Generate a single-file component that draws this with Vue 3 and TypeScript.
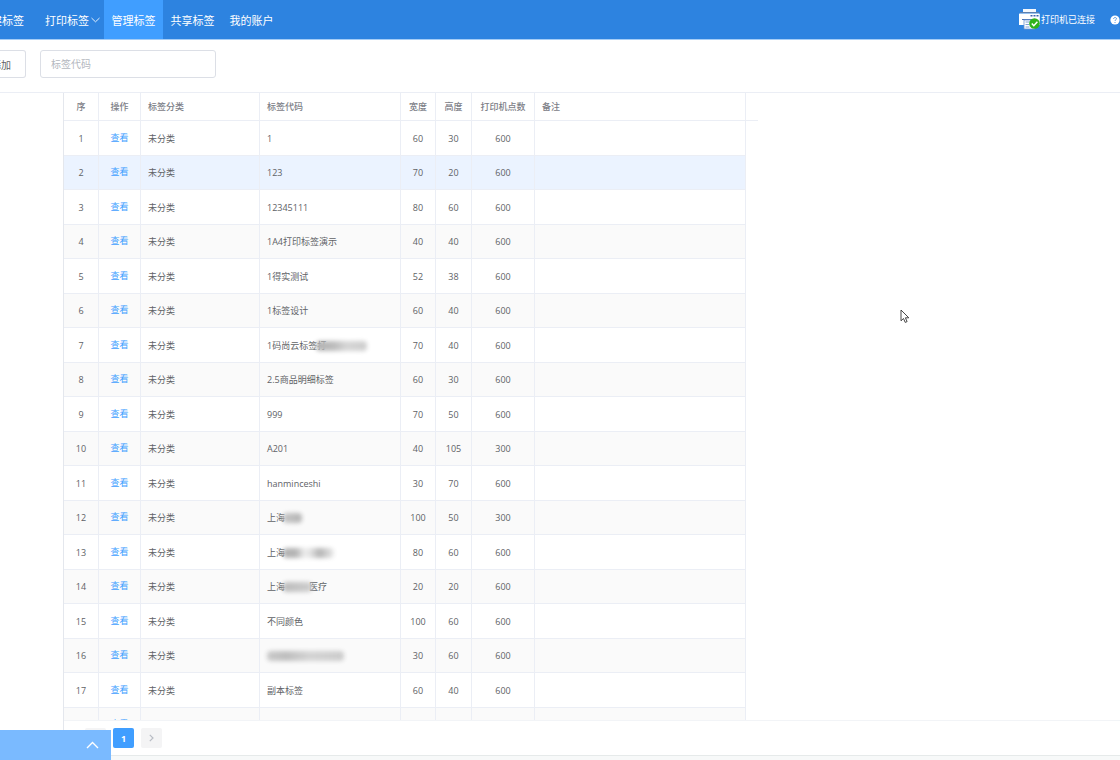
<script setup lang="ts">
import { ref } from 'vue'

interface Smudge {
  kind: string
  after?: string
}

interface LabelRow {
  id: string
  category: string
  code: string
  width: string
  height: string
  dpi: string
  smudge?: Smudge
}

const row = (id: string, code: string, width: string, height: string, dpi = '600', smudge?: Smudge): LabelRow => ({
  id,
  category: '未分类',
  code,
  width,
  height,
  dpi,
  smudge,
})

const navItems = ['打印标签', '管理标签', '共享标签', '我的账户']
const active = ref('管理标签')
const keyword = ref('')
const selected = ref('2')

const rows: LabelRow[] = [
  row('1', '1', '60', '30'),
  row('2', '123', '70', '20'),
  row('3', '12345111', '80', '60'),
  row('4', '1A4打印标签演示', '40', '40'),
  row('5', '1得实测试', '52', '38'),
  row('6', '1标签设计', '60', '40'),
  row('7', '1码尚云标签打', '70', '40', '600', { kind: 'wide' }),
  row('8', '2.5商品明细标签', '60', '30'),
  row('9', '999', '70', '50'),
  row('10', 'A201', '40', '105', '300'),
  row('11', 'hanminceshi', '30', '70'),
  row('12', '上海', '100', '50', '300', { kind: 'short' }),
  row('13', '上海', '80', '60', '600', { kind: 'split' }),
  row('14', '上海', '20', '20', '600', { kind: 'medium', after: '医疗' }),
  row('15', '不同颜色', '100', '60'),
  row('16', '', '30', '60', '600', { kind: 'full' }),
  row('17', '副本标签', '60', '40'),
  { id: '', category: '', code: '', width: '', height: '', dpi: '' },
]
</script>

<template>
  <div class="page">
    <header class="topbar">
      <nav class="nav">
        <a href="#" class="nav-item first">新建标签</a>
        <a
          v-for="item in navItems"
          :key="item"
          href="#"
          class="nav-item"
          :class="{ active: item === active, submenu: item === '打印标签' }"
          @click.prevent="active = item"
        >
          {{ item }}
          <svg v-if="item === '打印标签'" width="9" height="6" viewBox="0 0 9 6" aria-hidden="true">
            <path d="M.5 1l4 3.800L8.500 1" fill="none" stroke="#e3effc" stroke-width="1" />
          </svg>
        </a>
      </nav>
      <div class="printer">
        <svg width="21" height="21" viewBox="0 0 21 21" aria-hidden="true">
          <path d="M4 0h13v4H4z" fill="#f4f8fd" />
          <path d="M1 4.500h19a.8.8 0 0 1 .8.800V16H0V5.300a.8.800 0 0 1 1-.8z" fill="#fff" />
          <path d="M1 3.500h19" stroke="#5d7fae" stroke-width="1" />
          <path d="M11.500 6h2v1.500h-2zM14.500 6h2v1.500h-2zM17.500 6h2v1.500h-2z" fill="#3c63ae" />
          <path d="M3 10.500h14" stroke="#4a72b4" stroke-width="1" />
          <path d="M5 11h11v9H5z" fill="#fff" stroke="#6b93d0" stroke-width=".8" />
          <path d="M6.500 13h5M6.500 15.500h4M6.500 18h4" stroke="#7f9fd4" stroke-width="1" />
          <circle cx="15.500" cy="14.500" r="5.300" fill="#2fb31c" />
          <path d="M12.800 14.500l2 2.200 3.600-4" fill="none" stroke="#fff" stroke-width="1.500" />
        </svg>
        <span class="printer-text">打印机已连接</span>
        <svg class="help" width="10" height="10" viewBox="0 0 10 10" aria-hidden="true">
          <circle cx="5" cy="5" r="4.600" fill="#fff" />
          <path d="M3.600 4c0-2 2.900-1.900 2.900-.3C6.500 4.800 5 4.700 5 6M5 7v1" fill="none" stroke="#4c8fdc" stroke-width=".9" />
        </svg>
      </div>
    </header>

    <div class="toolbar">
      <button type="button" class="add">添加</button>
      <input v-model="keyword" class="search" type="text" placeholder="标签代码" aria-label="标签代码" />
    </div>

    <main class="panel">
      <div class="grid">
        <table>
          <colgroup>
            <col class="c-no" />
            <col class="c-op" />
            <col class="c-cat" />
            <col class="c-code" />
            <col class="c-w" />
            <col class="c-h" />
            <col class="c-dpi" />
            <col class="c-note" />
            <col class="c-gutter" />
          </colgroup>
          <thead>
            <tr>
              <th class="mid">序</th>
              <th class="mid">操作</th>
              <th>标签分类</th>
              <th>标签代码</th>
              <th class="mid">宽度</th>
              <th class="mid">高度</th>
              <th class="mid">打印机点数</th>
              <th>备注</th>
              <td class="gutter-head"></td>
            </tr>
          </thead>
          <tbody>
            <tr v-for="(r, i) in rows" :key="i" :class="{ selected: r.id === selected }" @click="selected = r.id">
              <td class="mid">{{ r.id }}</td>
              <td class="mid"><a href="#" class="view" @click.prevent>查看</a></td>
              <td>{{ r.category }}</td>
              <td>
                <span class="code">
                  <span>{{ r.code }}</span>
                  <template v-if="r.smudge">
                    <span class="smudge" :class="r.smudge.kind"></span>
                    <span v-if="r.smudge.after">{{ r.smudge.after }}</span>
                  </template>
                </span>
              </td>
              <td class="mid">{{ r.width }}</td>
              <td class="mid">{{ r.height }}</td>
              <td class="mid">{{ r.dpi }}</td>
              <td></td>
              <td class="gutter"></td>
            </tr>
          </tbody>
        </table>
      </div>
      <div class="pager">
        <button type="button" class="pg" disabled aria-label="上一页"></button>
        <button type="button" class="pg current">1</button>
        <button type="button" class="pg" disabled aria-label="下一页">
          <svg width="5" height="8" viewBox="0 0 5 8" aria-hidden="true">
            <path d="M.8.800L4 4 .8 7.200" fill="none" stroke="#b8bcc4" stroke-width="1.200" />
          </svg>
        </button>
      </div>
    </main>
    <div class="foot"></div>

    <button type="button" class="drawer" aria-label="展开">
      <svg width="13" height="8" viewBox="0 0 13 8" aria-hidden="true">
        <path d="M1 7l5.500-5.500L12 7" fill="none" stroke="#fff" stroke-width="1.400" />
      </svg>
    </button>

    <svg class="pointer" width="10" height="15" viewBox="0 0 10 15" aria-hidden="true">
      <path d="M1 1v10.800l2.500-2.300 1.700 3.900 1.900-.8-1.700-3.800h3.400z" fill="#fff" stroke="#333" stroke-width=".9" />
    </svg>
  </div>
</template>

<style>
body {
  margin: 0;
  background: #fff;
}
</style>

<style scoped>
.page {
  position: relative;
  display: flex;
  flex-direction: column;
  height: 100vh;
  overflow: hidden;
  box-sizing: border-box;
  font-family: 'Open Sans', 'Noto Sans CJK SC', sans-serif;
  font-size: 9px;
  color: #606266;
}

.topbar {
  display: flex;
  justify-content: space-between;
  flex: none;
  height: 39px;
  background: #2d83e0;
  border-bottom: 1px solid #a5cdf6;
}

.nav {
  display: flex;
}

.nav-item {
  display: flex;
  align-items: center;
  justify-content: center;
  width: 59px;
  font-size: 11px;
  color: #fff;
  white-space: nowrap;
  text-decoration: none;
}

.nav-item.first {
  width: 24px;
  padding-right: 14px;
  justify-content: flex-end;
  overflow: hidden;
}

.nav-item.submenu {
  justify-content: flex-start;
  width: 59px;
  padding-left: 7px;
  gap: 2px;
}

.nav-item.active {
  background: #409eff;
}

.printer {
  display: flex;
  align-items: center;
  gap: 1px;
  color: #fff;
}

.printer-text {
  white-space: nowrap;
}

.help {
  margin-left: 14px;
}

.toolbar {
  display: flex;
  align-items: flex-start;
  flex: none;
  gap: 14px;
  padding: 10px 0 14px;
  border-bottom: 1px solid #ebeef5;
}

.add,
.search {
  box-sizing: border-box;
  height: 28px;
  border: 1px solid #dcdfe6;
  border-radius: 3px;
  background: #fff;
  font-family: inherit;
  font-size: 10px;
  color: #606266;
  outline: none;
}

.add {
  display: flex;
  align-items: center;
  justify-content: flex-end;
  width: 26px;
  padding: 0 14px 0 0;
  border-left: 0;
  border-radius: 0 3px 3px 0;
  white-space: nowrap;
  overflow: hidden;
}

.search {
  width: 176px;
  padding: 0 10px;
}

.search::placeholder {
  color: #b4b8c0;
  opacity: 1;
}

.panel {
  display: flex;
  flex: 1;
  flex-direction: column;
  min-height: 0;
  margin-left: 63px;
  border-left: 1px solid #e4e7ed;
}

.grid {
  flex: 1;
  min-height: 0;
  overflow: hidden;
  border-bottom: 1px solid #f2f4f7;
}

table {
  width: 694px;
  table-layout: fixed;
  border-collapse: separate;
  border-spacing: 0;
}

.c-no { width: 35px; }
.c-op { width: 42px; }
.c-cat { width: 119px; }
.c-code { width: 141px; }
.c-w { width: 35px; }
.c-h { width: 36px; }
.c-dpi { width: 63px; }
.c-note { width: 211px; }
.c-gutter { width: 12px; }

th,
td {
  box-sizing: border-box;
  padding: 0 0 0 7px;
  border-right: 1px solid #ebeef5;
  border-bottom: 1px solid #ebeef5;
  line-height: 12px;
  text-align: left;
  vertical-align: middle;
  white-space: nowrap;
}

td {
  padding-top: 1px;
}

th {
  height: 28px;
  font-weight: 500;
  color: #7d8087;
}

th.mid,
td.mid {
  padding-left: 0;
  text-align: center;
}

tbody tr:nth-child(odd) td {
  height: 35px;
}

tbody tr:nth-child(even) td {
  height: 34px;
  background: #fafafa;
}

tbody tr.selected td {
  background: #ebf3ff;
}

td.gutter-head {
  padding: 0;
  border-right: 0;
}

tbody tr td.gutter {
  padding: 0;
  border: 0;
  background: none;
}

.view {
  display: block;
  padding-bottom: 2px;
  color: #409eff;
  text-decoration: none;
}

.code {
  display: flex;
  align-items: center;
}

.smudge {
  height: 10px;
  border-radius: 4px;
  filter: blur(2px);
}

.smudge.wide {
  width: 51px;
  margin-left: -10px;
  background: linear-gradient(90deg, #b4b4b4, #bcbcbc 35%, #d6d6d6 60%, #cecece);
}

.smudge.short {
  width: 19px;
  margin-left: -2px;
  background: linear-gradient(90deg, #c6c6c6, #b6b6b6);
}

.smudge.split {
  width: 51px;
  margin-left: -2px;
  background: linear-gradient(90deg, #b4b4b4 25%, #ececec 42%, #e6e6e6 52%, #b4b4b4 72%, #ececec);
}

.smudge.medium {
  width: 29px;
  margin-left: -2px;
  margin-right: -3px;
  background: linear-gradient(90deg, #bcbcbc, #cecece);
}

.smudge.full {
  width: 77px;
  background: linear-gradient(90deg, #cacaca, #bebebe 25%, #d4d4d4 55%, #cccccc);
}

.pager {
  display: flex;
  flex: none;
  gap: 7px;
  padding: 7px 0 7px 21px;
}

.pg {
  display: flex;
  align-items: center;
  justify-content: center;
  width: 21px;
  height: 20px;
  padding: 0;
  border: 0;
  border-radius: 2px;
  background: #f4f4f5;
  font-family: inherit;
  font-size: 9px;
  font-weight: 700;
  color: #606266;
}

.pg.current {
  background: #409eff;
  color: #fff;
}

.foot {
  flex: none;
  height: 4px;
  background: #f7f9f9;
  border-top: 1px solid #e6eaea;
}

.drawer {
  position: absolute;
  left: 0;
  bottom: 0;
  display: flex;
  align-items: center;
  justify-content: flex-end;
  width: 111px;
  height: 30px;
  padding: 0 12px 0 0;
  border: 0;
  background: #7abaff;
}

.pointer {
  position: absolute;
  left: 900px;
  top: 309px;
}
</style>
